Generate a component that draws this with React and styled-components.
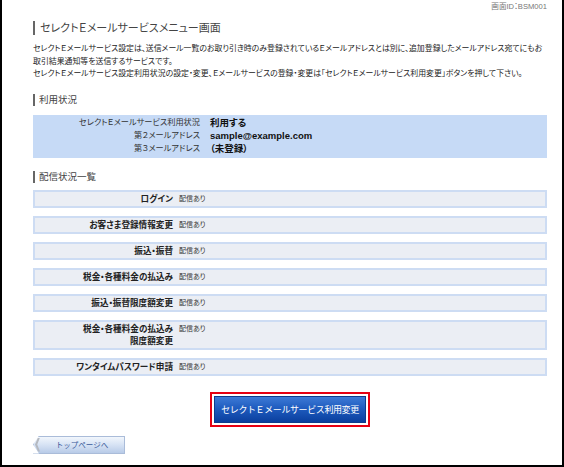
import React from "react";
import styled, { createGlobalStyle } from "styled-components";

const GlobalStyle = createGlobalStyle`
  html, body {
    margin: 0;
    padding: 0;
    background: #fff;
  }
  body {
    font-family: "Liberation Sans", "Noto Sans CJK JP", sans-serif;
    color: #333;
    font-feature-settings: "palt";
  }
`;

const Frame = styled.div`
  width: 564px;
  height: 467px;
  box-sizing: border-box;
  border: 2px solid #000;
  border-top: none;
  padding: 2px 15px 0 31px;
  overflow: hidden;
`;

const ScreenId = styled.div`
  text-align: right;
  font-size: 7.6px;
  line-height: 10px;
  color: #777;
`;

const PageTitle = styled.h1`
  margin: 9px 0 0;
  padding-left: 5px;
  border-left: 2px solid #666;
  font-size: 11px;
  line-height: 14px;
  font-weight: normal;
  color: #444;
`;

const Description = styled.p`
  margin: 8px 0 0;
  font-size: 7.9px;
  line-height: 12.5px;
  color: #222;
`;

const SectionTitle = styled.h2`
  margin: ${p => p.$top}px 0 0;
  padding-left: 4px;
  border-left: 2px solid #666;
  font-size: 9.5px;
  line-height: 12px;
  font-weight: normal;
  color: #444;
`;

const StatusBox = styled.div`
  margin-top: 9px;
  padding: 1px 0 3px;
  background: #c6daf6;
  display: grid;
  grid-template-columns: 167px 1fr;
  column-gap: 10px;
`;

const StatusLabel = styled.div`
  text-align: right;
  font-size: 8.2px;
  line-height: 13px;
  color: #333;
`;

const StatusValue = styled.div`
  font-size: 9.5px;
  line-height: 13px;
  font-weight: bold;
  color: #111;
`;

const DeliveryList = styled.div`
  margin-top: 7px;
  display: flex;
  flex-direction: column;
  gap: 8px;
`;

const DeliveryRow = styled.div`
  box-sizing: border-box;
  min-height: 18px;
  padding: 1px 0;
  border: 2px solid #cddcf3;
  background: #ebeef4;
  display: flex;
  align-items: flex-start;
  gap: 6px;
`;

const DeliveryName = styled.div`
  width: 138px;
  text-align: right;
  font-size: 8.6px;
  line-height: 12px;
  font-weight: bold;
  color: #222;
`;

const DeliveryState = styled.div`
  font-size: 7px;
  line-height: 12px;
  color: #333;
`;

const ActionArea = styled.div`
  margin-top: 16px;
  display: flex;
  justify-content: center;
`;

const Highlight = styled.div`
  border: 2px solid #e60012;
  padding: 2px;
`;

const PrimaryButton = styled.button`
  width: 152px;
  height: 27px;
  border: 1px solid #0c3c8c;
  background: linear-gradient(#3d7ad6 0%, #1f5cbf 45%, #0a3f9e 100%);
  color: #fff;
  font-family: inherit;
  font-size: 9px;
  letter-spacing: -0.4px;
  white-space: nowrap;
  padding: 0;
  cursor: pointer;
  display: block;
`;

const BackButton = styled.button`
  position: relative;
  margin-top: 9px;
  width: 92px;
  height: 18px;
  border: 1px solid #aabcd9;
  background: linear-gradient(#f2f6fc 0%, #d6e2f4 50%, #b8cbe8 100%);
  color: #3a5a9a;
  font-family: inherit;
  font-size: 7.5px;
  padding: 0 0 0 6px;
  cursor: pointer;
  display: block;
  &::before {
    content: "";
    position: absolute;
    left: -1px;
    top: -1px;
    bottom: -1px;
    width: 6px;
    background: #fff;
    clip-path: polygon(0 0, 100% 0, 0 50%, 100% 100%, 0 100%);
  }
  &::after {
    content: "";
    position: absolute;
    left: 1px;
    top: 1px;
    bottom: 1px;
    width: 5px;
    background: #b5b9c0;
    clip-path: polygon(100% 0, 45% 50%, 100% 100%, 60% 100%, 0 50%, 60% 0);
  }
`;

const statusRows = [
  ["セレクトＥメールサービス利用状況", "利用する"],
  ["第２メールアドレス", "sample@example.com"],
  ["第３メールアドレス", "（未登録）"],
];

const deliveryRows = [
  ["ログイン"],
  ["お客さま登録情報変更"],
  ["振込・振替"],
  ["税金・各種料金の払込み"],
  ["振込・振替限度額変更"],
  ["税金・各種料金の払込み", "限度額変更"],
  ["ワンタイムパスワード申請"],
];

export default function App() {
  return (
    <>
      <GlobalStyle />
      <Frame>
        <ScreenId>画面ID：BSM001</ScreenId>
        <PageTitle>セレクトＥメールサービスメニュー画面</PageTitle>
        <Description>
          セレクトＥメールサービス設定は、送信メール一覧のお取り引き時のみ登録されているＥメールアドレスとは別に、追加登録したメールアドレス宛てにもお取引結果通知等を送信するサービスです。
          <br />
          セレクトＥメールサービス設定利用状況の設定・変更、Ｅメールサービスの登録・変更は「セレクトＥメールサービス利用変更」ボタンを押して下さい。
        </Description>

        <SectionTitle $top={13}>利用状況</SectionTitle>
        <StatusBox>
          {statusRows.map(([label, value]) => (
            <React.Fragment key={label}>
              <StatusLabel>{label}</StatusLabel>
              <StatusValue>{value}</StatusValue>
            </React.Fragment>
          ))}
        </StatusBox>

        <SectionTitle $top={13}>配信状況一覧</SectionTitle>
        <DeliveryList>
          {deliveryRows.map(lines => (
            <DeliveryRow key={lines.join("")}>
              <DeliveryName>
                {lines.map((l, i) => (
                  <div key={i}>{l}</div>
                ))}
              </DeliveryName>
              <DeliveryState>配信あり</DeliveryState>
            </DeliveryRow>
          ))}
        </DeliveryList>

        <ActionArea>
          <Highlight>
            <PrimaryButton>セレクトＥメールサービス利用変更</PrimaryButton>
          </Highlight>
        </ActionArea>

        <BackButton>トップページへ</BackButton>
      </Frame>
    </>
  );
}
